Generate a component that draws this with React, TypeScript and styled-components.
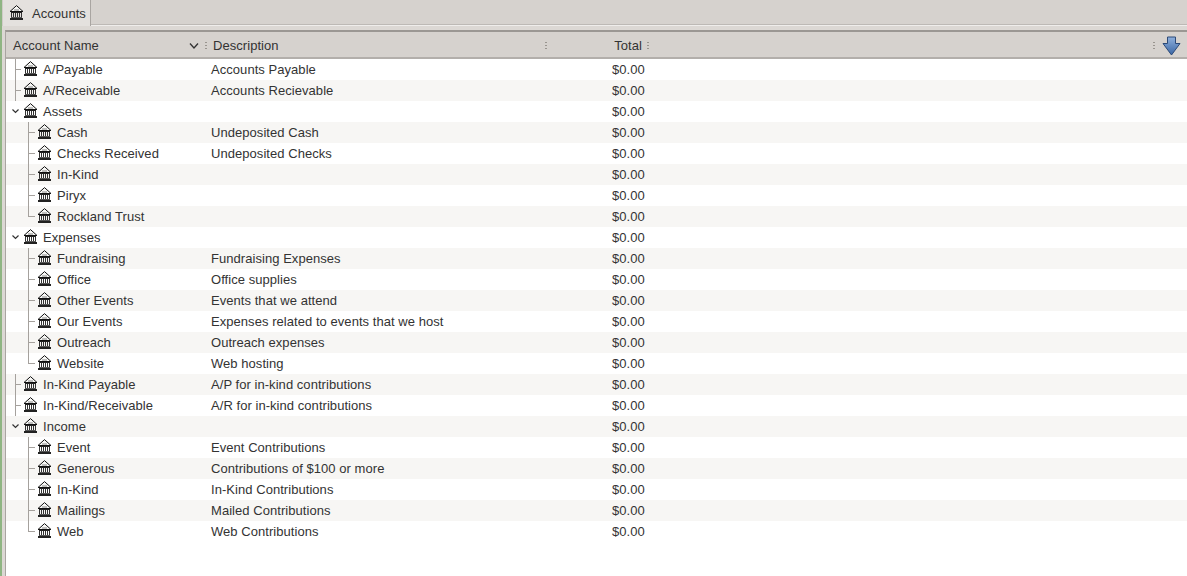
import React from "react";
import styled, { createGlobalStyle } from "styled-components";

const Global = createGlobalStyle`
  html, body { margin: 0; padding: 0; height: 100%; overflow: hidden; background: #dcd8d4; }
  #root { height: 576px; }
  * { box-sizing: border-box; }
`;

const Page = styled.div`
  width: 1187px; height: 576px; display: flex; flex-direction: column;
  font-family: "Liberation Sans", sans-serif; font-size: 13px; letter-spacing: .05px; color: #333;
  background: #dcd8d4; border-left: 2px solid #8fb583;
`;
const TabBar = styled.div`
  height: 26px; flex: none; display: flex; background: #d6d2ce;
  border-bottom: 1px solid #efedeb; box-shadow: inset 0 -1px 0 #bdb9b5;
`;
const Tab = styled.div`
  width: 89px; height: 26px; display: flex; align-items: center; gap: 8px; padding-left: 6px;
  background: #e4e1de; border-right: 1px solid #a9a5a1; border-left: 1px solid #d0ccc8;
`;
const Panel = styled.div`
  flex: 1; display: flex; flex-direction: column; margin: 4px 0 0 3px;
  background: #fff; border-left: 1px solid #a9a5a1; border-top: 2px solid #9b9793;
  min-height: 0;
`;
const Head = styled.div`
  height: 27px; flex: none; display: grid; grid-template-columns: 198px 340px 102px 1fr;
  background: #d6d2ce; border-bottom: 2px solid #b3afab; align-items: center;
`;
const HeadCell = styled.div<{ $right?: boolean; $left?: number }>`
  position: relative; height: 100%; display: flex; align-items: center;
  padding-left: ${p => p.$left ?? 7}px;
  justify-content: ${p => (p.$right ? "flex-end" : "flex-start")};
  padding-right: ${p => (p.$right ? "4px" : "0")};
  padding-top: 1px;
`;
const Grip = styled.span<{ $right?: number }>`
  position: absolute; right: ${p => p.$right ?? -3}px; top: 10px; width: 2px; height: 8px;
  background: repeating-linear-gradient(to bottom, #99958f 0 1px, transparent 1px 3px);
`;
const Sort = styled.svg`position: absolute; right: 5px; top: 10px;`;
const ArrowBox = styled.svg`position: absolute; right: 6px; top: 4px;`;
const Body = styled.div`flex: 1; min-height: 0;`;
const Row = styled.div<{ $alt: boolean }>`
  height: 21px; display: grid; grid-template-columns: 198px 340px 102px 1fr; align-items: center;
  background: ${p => (p.$alt ? "#f7f6f4" : "#fff")};
`;
const NameCell = styled.div<{ $depth: number }>`
  position: relative; display: flex; align-items: center; height: 21px;
  padding-left: ${p => (p.$depth ? 31 : 17)}px; gap: 5px; white-space: nowrap;
`;
const Desc = styled.div`padding-left: 7px; white-space: nowrap;`;
const Total = styled.div`padding-left: 68px;`;
const Tree = styled.svg`position: absolute; left: 0; top: 0;`;
const BankIcon = styled.svg`flex: none; margin-bottom: 2px;`;

const Bank = () => (
  <BankIcon width="15" height="15" viewBox="0 0 15 15">
    <path d="M7.5 .6 L14 6.5 H1 Z" fill="#f8f8f6" stroke="#111" strokeWidth="1" strokeLinejoin="round" />
    <path d="M5 5h5" stroke="#888" strokeWidth="1" />
    <g shapeRendering="crispEdges">
      <rect x="2" y="7" width="11" height="1" fill="#222" />
      <path d="M2 8h1v4H2zM4 8h1v4H4zM6 8h1v4H6zM8 8h1v4H8zM10 8h1v4h-1zM12 8h1v4h-1z" fill="#333" />
      <rect x="2" y="12" width="11" height="1" fill="#555" />
      <rect x="1" y="13" width="13" height="2" fill="#222" />
    </g>
  </BankIcon>
);

type R = { n: string; d?: string; depth: 0 | 1; open?: boolean; last?: boolean };
const rows: R[] = [
  { n: "A/Payable", d: "Accounts Payable", depth: 0 },
  { n: "A/Receivable", d: "Accounts Recievable", depth: 0 },
  { n: "Assets", depth: 0, open: true },
  { n: "Cash", d: "Undeposited Cash", depth: 1 },
  { n: "Checks Received", d: "Undeposited Checks", depth: 1 },
  { n: "In-Kind", depth: 1 },
  { n: "Piryx", depth: 1 },
  { n: "Rockland Trust", depth: 1, last: true },
  { n: "Expenses", depth: 0, open: true },
  { n: "Fundraising", d: "Fundraising Expenses", depth: 1 },
  { n: "Office", d: "Office supplies", depth: 1 },
  { n: "Other Events", d: "Events that we attend", depth: 1 },
  { n: "Our Events", d: "Expenses related to events that we host", depth: 1 },
  { n: "Outreach", d: "Outreach expenses", depth: 1 },
  { n: "Website", d: "Web hosting", depth: 1, last: true },
  { n: "In-Kind Payable", d: "A/P for in-kind contributions", depth: 0 },
  { n: "In-Kind/Receivable", d: "A/R for in-kind contributions", depth: 0 },
  { n: "Income", depth: 0, open: true },
  { n: "Event", d: "Event Contributions", depth: 1 },
  { n: "Generous", d: "Contributions of $100 or more", depth: 1 },
  { n: "In-Kind", d: "In-Kind Contributions", depth: 1 },
  { n: "Mailings", d: "Mailed Contributions", depth: 1 },
  { n: "Web", d: "Web Contributions", depth: 1, last: true },
];

const Connector = ({ r }: { r: R }) => (
  <Tree width="30" height="21" stroke="#a5a19d" fill="none" shapeRendering="crispEdges">
    {r.depth === 0 && !r.open && <path d="M9.5 0V21M10 10.5H15" />}
    {r.depth === 0 && r.open && (
      <path d="M6.5 8.5l3 3 3-3" stroke="#333" strokeWidth="1.2" shapeRendering="auto" />
    )}
    {r.depth === 1 && <path d={r.last ? "M22.5 0V10.5H29" : "M22.5 0V21M23 10.5H29"} />}
  </Tree>
);

export default function App() {
  return (
    <Page>
      <Global />
      <TabBar>
        <Tab><Bank />Accounts</Tab>
      </TabBar>
      <Panel>
        <Head>
          <HeadCell>
            Account Name
            <Sort width="10" height="8" viewBox="0 0 10 8"><path d="M1 1.5l4 4.5 4-4.5" fill="none" stroke="#333" strokeWidth="1.3" /></Sort>
            <Grip />
          </HeadCell>
          <HeadCell $left={9}>Description<Grip /></HeadCell>
          <HeadCell $right>Total<Grip /></HeadCell>
          <HeadCell>
            <Grip $right={32} />
            <ArrowBox width="19" height="20" viewBox="0 0 19 20">
              <defs>
                <linearGradient id="arr" x1="0" x2="0" y1="0" y2="1">
                  <stop offset="0" stopColor="#8fb0dc" /><stop offset="1" stopColor="#3a66a4" />
                </linearGradient>
              </defs>
              <path d="M5.5 1h8v6.5h4.5L9.5 19 1 7.5h4.5z" fill="url(#arr)" stroke="#2c4a78" strokeWidth="1" />
            </ArrowBox>
          </HeadCell>
        </Head>
        <Body>
          {rows.map((r, i) => (
            <Row key={i} $alt={i % 2 === 1}>
              <NameCell $depth={r.depth}>
                <Connector r={r} />
                <Bank />
                <span>{r.n}</span>
              </NameCell>
              <Desc>{r.d}</Desc>
              <Total>$0.00</Total>
              <div />
            </Row>
          ))}
        </Body>
      </Panel>
    </Page>
  );
}
